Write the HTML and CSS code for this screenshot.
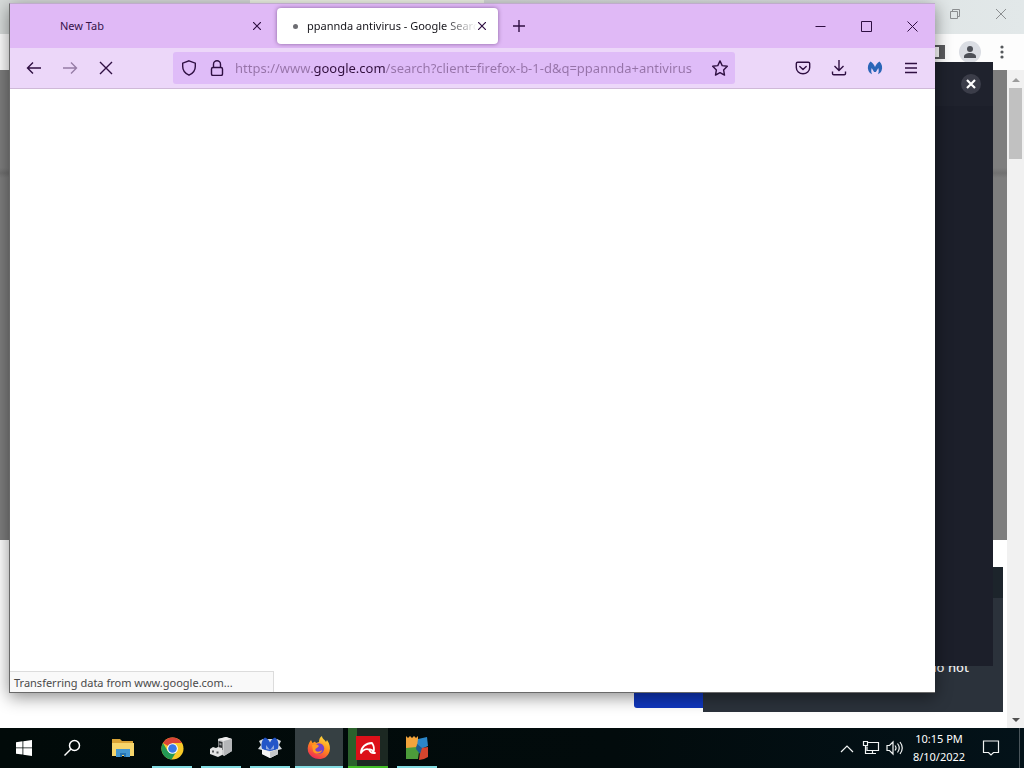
FILE: index.html
```html
<!DOCTYPE html>
<html lang="en">
<head>
<meta charset="utf-8">
<title>Desktop</title>
<link rel="stylesheet" href="styles.css">
</head>
<body>
<div class="desktop">
  <main class="workspace">
    <section class="chrome" aria-label="Chrome window">
      <header class="chrome-titlebar">
        <span class="chrome-tab"></span>
        <div class="chrome-controls">
          <button class="icon-btn chrome-ctl" aria-label="Restore"><svg width="12" height="12" viewBox="0 0 12 12" fill="none" stroke="#8b8e90"><path d="M1.500 3.500h7v7h-7zM3.500 3.500v-2h7v7h-2"/></svg></button>
          <button class="icon-btn chrome-ctl" aria-label="Close"><svg width="12" height="12" viewBox="0 0 12 12" fill="none" stroke="#8b8e90"><path d="M1 1l10 10M11 1L1 11"/></svg></button>
        </div>
      </header>
      <div class="chrome-toolbar">
        <button class="icon-btn chrome-tool" aria-label="Side panel"><svg width="16" height="14" viewBox="0 0 16 14"><path fill="#5a5b5e" d="M0 0h16v14H0zM2 2v10h8V2z" fill-rule="evenodd"/></svg></button>
        <button class="icon-btn avatar" aria-label="Profile"><svg width="22" height="22" viewBox="0 0 22 22"><circle cx="11" cy="11" r="11" fill="#dadde3"/><circle cx="11" cy="8" r="3" fill="#4d5057"/><path d="M5 17v-1.500c0-2 3-3.500 6-3.500s6 1.500 6 3.500V17z" fill="#4d5057"/></svg></button>
        <button class="icon-btn chrome-tool" aria-label="Menu"><svg width="4" height="14" viewBox="0 0 4 14" fill="#55585c"><circle cx="2" cy="2" r="1.600"/><circle cx="2" cy="7" r="1.600"/><circle cx="2" cy="12" r="1.600"/></svg></button>
      </div>
      <div class="chrome-body">
        <div class="chrome-page">
          <div class="page-dimmed"></div>
          <div class="page-rest"></div>
        </div>
        <div class="scrollbar">
          <span class="arrow arrow-up"></span>
          <span class="thumb"></span>
          <span class="arrow arrow-down"></span>
        </div>
      </div>
    </section>

    <button class="accept" aria-label="Accept"></button>
    <aside class="toast"><div class="toast-head"></div><p class="toast-text">do not</p></aside>
    <aside class="popup">
      <div class="popup-head">
        <button class="icon-btn popup-close" aria-label="Close popup"><svg width="10" height="10" viewBox="0 0 10 10" stroke="#fff" stroke-width="2.200" fill="none"><path d="M1 1l8 8M9 1L1 9"/></svg></button>
      </div>
    </aside>

    <section class="firefox" aria-label="Firefox window">
      <header class="tabstrip">
        <div class="tab">
          <span class="tab-title">New Tab</span>
          <button class="icon-btn tab-close" aria-label="Close New Tab"><svg width="8" height="8" viewBox="0 0 8 8"><path d="M0 0l8 8M8 0L0 8"/></svg></button>
        </div>
        <div class="tab tab-active">
          <span class="loading-dot"></span>
          <span class="tab-title">ppannda antivirus - Google Search</span>
          <button class="icon-btn tab-close" aria-label="Close search tab"><svg width="8" height="8" viewBox="0 0 8 8"><path d="M0 0l8 8M8 0L0 8"/></svg></button>
        </div>
        <button class="icon-btn new-tab" aria-label="New tab"><svg width="12" height="12" viewBox="0 0 12 12"><path d="M6 0v12M0 6h12"/></svg></button>
        <div class="window-controls">
          <button class="icon-btn control" aria-label="Minimize"><svg width="11" height="11" viewBox="0 0 11 11"><path d="M.5 5.500h10"/></svg></button>
          <button class="icon-btn control" aria-label="Maximize"><svg width="11" height="11" viewBox="0 0 11 11"><path d="M.5.5h10v10H.5z"/></svg></button>
          <button class="icon-btn control" aria-label="Close"><svg width="11" height="11" viewBox="0 0 11 11"><path d="M.5.5l10 10M10.500.5l-10 10"/></svg></button>
        </div>
      </header>
      <nav class="toolbar">
        <div class="nav-group">
          <button class="icon-btn tool" aria-label="Back"><svg width="16" height="16" viewBox="0 0 16 16"><path d="M15 8H1.500M7 2.500L1.500 8 7 13.500"/></svg></button>
          <button class="icon-btn tool tool-off" aria-label="Forward"><svg width="16" height="16" viewBox="0 0 16 16"><path d="M1 8h13.500M9 2.500L14.500 8 9 13.500"/></svg></button>
          <button class="icon-btn tool" aria-label="Stop"><svg width="16" height="16" viewBox="0 0 16 16"><path d="M2 2l12 12M14 2L2 14"/></svg></button>
        </div>
        <div class="urlbar">
          <button class="icon-btn url-icon" aria-label="Tracking protection"><svg width="16" height="16" viewBox="0 0 16 16"><path d="M8 .8l6.300 2.400v3.300c0 4-2.500 7-6.300 8.700C4.200 13.500 1.700 10.500 1.700 6.500V3.200z"/></svg></button>
          <button class="icon-btn url-icon" aria-label="Site information"><svg width="16" height="16" viewBox="0 0 16 16"><rect x="2.500" y="7.500" width="11" height="8" rx="1.500"/><path d="M4.500 7.500V4.300a3.500 3.500 0 0 1 7 0v3.200"/></svg></button>
          <input class="url" type="text" aria-label="Address" value="https://www.google.com/search?client=firefox-b-1-d&amp;q=ppannda+antivirus">
          <button class="icon-btn url-icon" aria-label="Bookmark"><svg width="16" height="16" viewBox="0 0 16 16"><path d="M8 .9l2.200 4.700 5.100.7-3.700 3.600.9 5.200L8 12.600l-4.500 2.500.9-5.200L.7 6.300l5.100-.7z" stroke-linejoin="round"/></svg></button>
        </div>
        <div class="tool-group">
          <button class="icon-btn tool" aria-label="Save to Pocket"><svg width="16" height="16" viewBox="0 0 16 16"><path d="M2.700 2.200h10.600c.8 0 1.400.6 1.400 1.400V7.500a6.700 6.300 0 0 1-13.400 0V3.600c0-.8.600-1.400 1.400-1.400zM4.800 6.500L8 9.500l3.200-3" stroke-linecap="round" stroke-linejoin="round"/></svg></button>
          <button class="icon-btn tool" aria-label="Downloads"><svg width="16" height="16" viewBox="0 0 16 16"><path d="M8 0v10.500M3.500 6L8 10.500 12.500 6M1.500 11.500v2c0 .8.500 1.300 1.300 1.300h10.400c.8 0 1.300-.5 1.300-1.300v-2"/></svg></button>
          <button class="icon-btn tool" aria-label="Malwarebytes"><svg class="solid" width="16" height="16" viewBox="0 0 16 16"><path fill="#2b66b8" d="M3.500 1.500C5.500 2.500 7 4.500 8 7c1-2.500 2.500-4.500 4.500-5.500C15 4 15.800 7.500 14.600 10.500c-.6 1.700-1.900 3-3.600 3.800 1-2.400.9-4.300.3-6.300L8.900 12H7.100L4.700 8c-.6 2-.7 3.900.3 6.300C3.300 13.500 2 12.200 1.400 10.500.2 7.500 1 4 3.500 1.500z"/></svg></button>
          <button class="icon-btn tool" aria-label="Application menu"><svg width="16" height="16" viewBox="0 0 16 16"><path d="M2 3.500h12M2 8h12M2 12.500h12"/></svg></button>
        </div>
      </nav>
      <div class="content"><div class="status">Transferring data from www.google.com...</div></div>
    </section>
  </main>

  <footer class="taskbar">
    <button class="icon-btn task" aria-label="Start"><svg width="16" height="16" viewBox="0 0 16 16" fill="#fff"><path d="M0 2.200L6.500 1.300v6.200H0zM7.300 1.200L16 0v7.500H7.300zM0 8.300h6.500v6.300L0 13.700zM7.300 8.300H16V16l-8.700-1.200z"/></svg></button>
    <button class="icon-btn task" aria-label="Search"><svg width="18" height="18" viewBox="0 0 18 18" fill="none" stroke="#fff" stroke-width="1.500"><circle cx="11.500" cy="6.500" r="5"/><path d="M8 10L1.500 16.500"/></svg></button>
    <div class="apps">
      <button class="icon-btn app" aria-label="File Explorer"><svg width="22" height="18" viewBox="0 0 22 18"><path fill="#d9a336" d="M0 0h8l2 2h11v4H0z"/><path fill="#f6d56b" d="M0 4h22v13H0z"/><path fill="#4396d0" d="M4 10h14v8h-4v-4H8v4H4z"/><path fill="#2673b0" d="M8 14h6v4h-2v-2h-2v2H8z"/></svg></button>
      <button class="icon-btn app running" aria-label="Google Chrome"><svg width="23" height="23" viewBox="0 0 24 24"><circle cx="12" cy="12" r="11.500" fill="#f8c928"/><path fill="#db4437" d="M12 12L2 6.300A11.500 11.500 0 0 1 22 6.300H12z"/><path fill="#239954" d="M2 6.300A11.500 11.500 0 0 0 11 23.500L16.500 14.500 12 12 7 14.500z"/><circle cx="12" cy="12" r="5.600" fill="#fff"/><circle cx="12" cy="12" r="4.500" fill="#3879e8"/></svg></button>
      <button class="icon-btn app running" aria-label="Services"><svg width="24" height="24" viewBox="0 0 24 24"><path fill="#cfd0d1" d="M9 3l8-2 6 2v12l-8 5-6-4z"/><path fill="#ededed" d="M9 3l8-2 6 2-8 2z"/><path fill="#b4b6b8" d="M15 5l8-2v12l-8 5z"/><path fill="#2b2e30" d="M9.500 5l4 1v8l-4-2z"/><path fill="#9ca0a2" d="M10.500 7l2 .5v2l-2-.5z"/><path fill="#e2e3e3" d="M1 13l3-2 3 1 2-1 4 1v7l-4 2-8-3z"/><path fill="#55585a" d="M3 14.500h2v2H3zM7.500 15.500h2v2h-2z"/></svg></button>
      <button class="icon-btn app running" aria-label="Malwarebytes setup"><svg width="24" height="24" viewBox="0 0 24 24"><path fill="#d9dde2" d="M1 5l4-2 14 0 4 2-2 4 3 4-4 1v4l-8 4-8-4v-4l-4-1 3-4z"/><path fill="#2255c8" d="M7 1.500c2 .5 4 2.500 5 5 1-2.500 3-4.500 5-5 3.500 2.500 4.500 8 2.500 12l-7.500 1.500-7.500-1.500c-2-4-1-9.500 2.500-12z"/><path fill="#8fa9e0" d="M8 9l4 5-4-1zM16 9l-4 5 4-1z"/><path fill="#f5f5f5" d="M4 13l8 3 8-3v5l-8 4-8-4z"/><path fill="#c4c7ca" d="M12 16l8-3v5l-8 4z"/></svg></button>
      <button class="icon-btn app running current" aria-label="Firefox"><svg width="24" height="24" viewBox="0 0 24 24"><defs><linearGradient id="fire" x1=".8" y1="0" x2=".3" y2="1"><stop offset="0" stop-color="#ffe23e"/><stop offset=".5" stop-color="#ff8a1c"/><stop offset="1" stop-color="#ee2657"/></linearGradient></defs><path fill="url(#fire)" d="M4 4l1.500 3L8 5.500 9 7l3-1c0-3 1-5 3-6 0 3 3 3.500 4 6l1-2c3 4 3.500 8 2.500 11.500C21 20.500 17 23 12 23S2.500 20 1 15.500C0 11 1.500 7 4 4z"/><circle cx="12" cy="12.500" r="5.200" fill="#7542c9"/><path fill="#ff9a22" d="M5 9c3-1 5-1 7 1l-2 2c-2 .5-2 2-1 3s4 1 6-1c0 4-7 5-9 1z"/></svg></button>
      <button class="icon-btn app avira" aria-label="Avira"><svg width="24" height="24" viewBox="0 0 24 24"><path fill="#dc1019" d="M0 0h24v24H0z"/><path fill="none" stroke="#fff" stroke-width="1.800" stroke-linecap="round" stroke-linejoin="round" d="M5 17C5 11 10 7 16 7c2 3 2.500 6 1.500 9-1-2-2.500-3-4.500-2.500C10.500 12.500 7 13.500 5 17zM13 13.500c1 2.500 3 4 6 3.500"/></svg></button>
      <button class="icon-btn app running" aria-label="AVG"><svg width="24" height="24" viewBox="0 0 24 24"><path fill="#f2a43c" d="M1 0l2 2 2-2 2 2 2-2 2 2 2-2v8l-2 4H1z"/><path fill="#4c9c3a" d="M1 12l11-1 2 5-1 7H1z"/><path fill="#2b86c9" d="M13 3l9-2 1 9-7 3-4-3z"/><path fill="#d5452d" d="M16 12l7-1v10l-4 2-5 1 1-8z"/><path fill="#1c5c92" d="M12 8l5 4-2 6-4-5z"/></svg></button>
    </div>
    <div class="tray">
      <button class="icon-btn tray-btn" aria-label="Show hidden icons"><svg width="14" height="9" viewBox="0 0 14 9"><path d="M1 8l6-6 6 6"/></svg></button>
      <button class="icon-btn tray-btn" aria-label="Network"><svg width="18" height="16" viewBox="0 0 18 16"><path d="M6 2.500h10.500v8H5v-4M10.500 10.500v3M6 13.500h8M1.500 1.500h4v4h-4zM3.500 5.500v8H7"/></svg></button>
      <button class="icon-btn tray-btn" aria-label="Volume"><svg width="18" height="16" viewBox="0 0 18 16"><path d="M1 5.500h2.500L7 2v12l-3.500-3.500H1zM9 5.500q2 2.500 0 5M11.500 3.500q3.500 4.500 0 9M14 2q4.500 6 0 12"/></svg></button>
      <time class="clock" datetime="2022-08-10T22:15"><span>10:15 PM</span><span>8/10/2022</span></time>
      <button class="icon-btn action-center" aria-label="Notifications"><svg width="18" height="18" viewBox="0 0 18 18"><path d="M1.500 2h15v11.500h-5L9 16l-2.500-2.500h-5z"/></svg></button>
      <span class="peek"></span>
    </div>
  </footer>
</div>
</body>
</html>
```
FILE: styles.css
```css
* { box-sizing: border-box; }

body {
  margin: 0;
  font-family: "Noto Sans", "Open Sans", sans-serif;
  font-size: 11px;
}

.desktop {
  display: flex;
  flex-direction: column;
  height: 100vh;
  overflow: hidden;
}

.workspace {
  position: relative;
  flex: 1;
  overflow: hidden;
}

.icon-btn {
  display: flex;
  align-items: center;
  justify-content: center;
  flex: none;
  padding: 0;
  border: 0;
  background: none;
}

/* Background browser */
.chrome {
  display: flex;
  flex-direction: column;
  height: 100%;
  background: #fff;
}

.chrome-titlebar {
  display: flex;
  justify-content: space-between;
  height: 34px;
  padding-left: 250px;
  background: linear-gradient(90deg, #d7dbda 50%, #e2e8e9);
}

.chrome-tab {
  width: 234px;
  background: #f1f5e8;
}

.chrome-controls { display: flex; }

.chrome-ctl {
  width: 46px;
  height: 28px;
}

.chrome-toolbar {
  display: flex;
  align-items: center;
  justify-content: flex-end;
  gap: 14px;
  height: 36px;
  padding-right: 15px;
  background: #fdfdfd;
}

.chrome-tool { min-width: 16px; }
.chrome-tool:last-child { min-width: 14px; }

.chrome-body {
  display: flex;
  flex: 1;
}

.chrome-page {
  display: flex;
  flex-direction: column;
  flex: 1;
}

.page-dimmed {
  flex: 470;
  background: linear-gradient(#7e7e7e 98px, #717171 103px, #7e7e7e 108px);
}

.page-rest {
  flex: 188;
  background: #fff;
}

.scrollbar {
  display: flex;
  flex-direction: column;
  align-items: center;
  width: 17px;
  padding: 8px 0 6px;
  background: #f1f1f1;
}

.arrow {
  border: 4px solid transparent;
}

.arrow-up {
  border-top: 0;
  border-bottom-color: #9c9c9c;
}

.arrow-down {
  margin-top: auto;
  border-bottom: 0;
  border-top-color: #505050;
}

.thumb {
  width: 13px;
  height: 71px;
  margin-top: 6px;
  background: #c1c1c1;
}

.accept {
  position: absolute;
  right: 300px;
  bottom: 20px;
  width: 90px;
  height: 40px;
  border: 0;
  border-radius: 3px;
  background: #1037be;
}

.toast {
  position: absolute;
  right: 21px;
  bottom: 16px;
  width: 300px;
  height: 145px;
  background: #2b323b;
}

.toast-head {
  height: 31px;
  background: #1c242b;
}

.toast-text {
  margin: 60px 34px 0 0;
  color: #eee;
  font-size: 13px;
  font-weight: 500;
  line-height: 18px;
  text-align: right;
}

.popup {
  position: absolute;
  top: 62px;
  right: 31px;
  bottom: 62px;
  width: 600px;
  background: #1c1f2a;
}

.popup-head {
  display: flex;
  justify-content: flex-end;
  height: 44px;
  padding: 12px 12px 0 0;
  background: #1f222d;
}

.popup-close {
  width: 20px;
  height: 20px;
  border-radius: 50%;
  background: #3b3d49;
}

/* Foreground browser */
.firefox {
  position: absolute;
  top: 3px;
  right: 89px;
  bottom: 35px;
  left: 9px;
  display: flex;
  flex-direction: column;
  border: 1px solid #696969;
  border-right-width: 0;
  border-top-color: #bfaccb;
  background: #fff;
  box-shadow: 0 4px 16px rgba(0, 0, 0, 0.45);
}

.firefox svg {
  fill: none;
  stroke: #2f0f42;
  stroke-width: 1.4;
}

.firefox .solid { stroke: none; }

.tabstrip {
  display: flex;
  align-items: center;
  height: 44px;
  padding-left: 40px;
  background: #e0b9f6;
}

.tab {
  display: flex;
  align-items: center;
  width: 222px;
  height: 36px;
  padding: 0 10px;
  color: #35134a;
}

.tab-active {
  width: 221px;
  margin-left: 5px;
  padding: 0 11px 0 16px;
  border-radius: 4px;
  background: #fff;
  color: #15141a;
  box-shadow: 0 0 4px rgba(80, 40, 100, 0.6);
}

.tab-title {
  flex: 1;
  overflow: hidden;
  line-height: 18px;
  white-space: nowrap;
}

.tab-active .tab-title {
  mask-image: linear-gradient(90deg, #000 80%, transparent);
}

.tab-close {
  width: 10px;
  height: 20px;
}

.firefox .tab-close svg { stroke-width: 1.200; }

.loading-dot {
  width: 5px;
  height: 5px;
  margin-right: 9px;
  border-radius: 50%;
  background: #6d6d72;
}

.new-tab {
  width: 32px;
  height: 32px;
  margin-left: 5px;
}

.window-controls {
  display: flex;
  margin-left: auto;
}

.control {
  width: 46px;
  height: 36px;
}

.firefox .control svg { stroke-width: 1; }

.toolbar {
  display: flex;
  align-items: center;
  height: 41px;
  padding: 0 6px;
  border-bottom: 1px solid #cfb9d8;
  background: #ecd7f9;
}

.nav-group,
.tool-group { display: flex; }

.tool {
  width: 36px;
  height: 32px;
}

.tool-off { opacity: 0.45; }

.urlbar {
  display: flex;
  align-items: center;
  flex: 1;
  height: 32px;
  margin: 0 50px 0 49px;
  padding: 0 1px 0 2px;
  border-radius: 3px;
  background: #dfbcf8;
}

.url-icon {
  width: 28px;
  height: 32px;
}

.url {
  flex: 1;
  min-width: 0;
  margin-left: 4px;
  padding: 0;
  border: 0;
  outline: 0;
  background: linear-gradient(90deg, #9673a8 77px, #32103f 77px 150px, #9673a8 150px);
  background-clip: text;
  -webkit-background-clip: text;
  color: transparent;
  font-family: "Noto Sans", "Open Sans", sans-serif;
  font-size: 13px;
  line-height: 20px;
}

.content {
  display: flex;
  align-items: flex-end;
  flex: 1;
}

.status {
  min-width: 264px;
  padding: 2px 5px 0 4px;
  border: 1px solid #dcdcdc;
  border-width: 1px 1px 0 0;
  background: #f9f9f9;
  color: #4a4a4a;
  line-height: 18px;
}

/* Taskbar */
.taskbar {
  display: flex;
  height: 40px;
  background: linear-gradient(90deg, #010a09, #020b0c 60%, #031219);
}

.task { width: 48px; }

.apps {
  display: flex;
  gap: 1px;
  margin-left: 3px;
}

.app {
  position: relative;
  width: 48px;
}

.running::after {
  content: "";
  position: absolute;
  right: 4px;
  bottom: 0;
  left: 4px;
  height: 2px;
  background: #83dce2;
}

.current { background: #364043; }

.current::after {
  right: 0;
  left: 0;
}

.avira {
  width: 40px;
  margin: 0 4px;
  border-bottom: 2px solid #42bd27;
  background: linear-gradient(90deg, #2b612c 9px, #1c2822 9px);
}

.avira svg { margin-top: 2px; }

.tray {
  display: flex;
  align-items: center;
  margin-left: auto;
}

.tray svg,
.action-center svg {
  fill: none;
  stroke: #f1f4f4;
  stroke-width: 1.200;
}

.tray-btn {
  width: 24px;
  height: 40px;
}

.clock {
  display: flex;
  flex-direction: column;
  align-items: center;
  width: 60px;
  padding-left: 4px;
  color: #fff;
  line-height: 18px;
}

.action-center {
  width: 48px;
  height: 40px;
}

.peek {
  width: 5px;
  height: 40px;
  margin-left: 4px;
  border-left: 1px solid #4a555b;
}
```
